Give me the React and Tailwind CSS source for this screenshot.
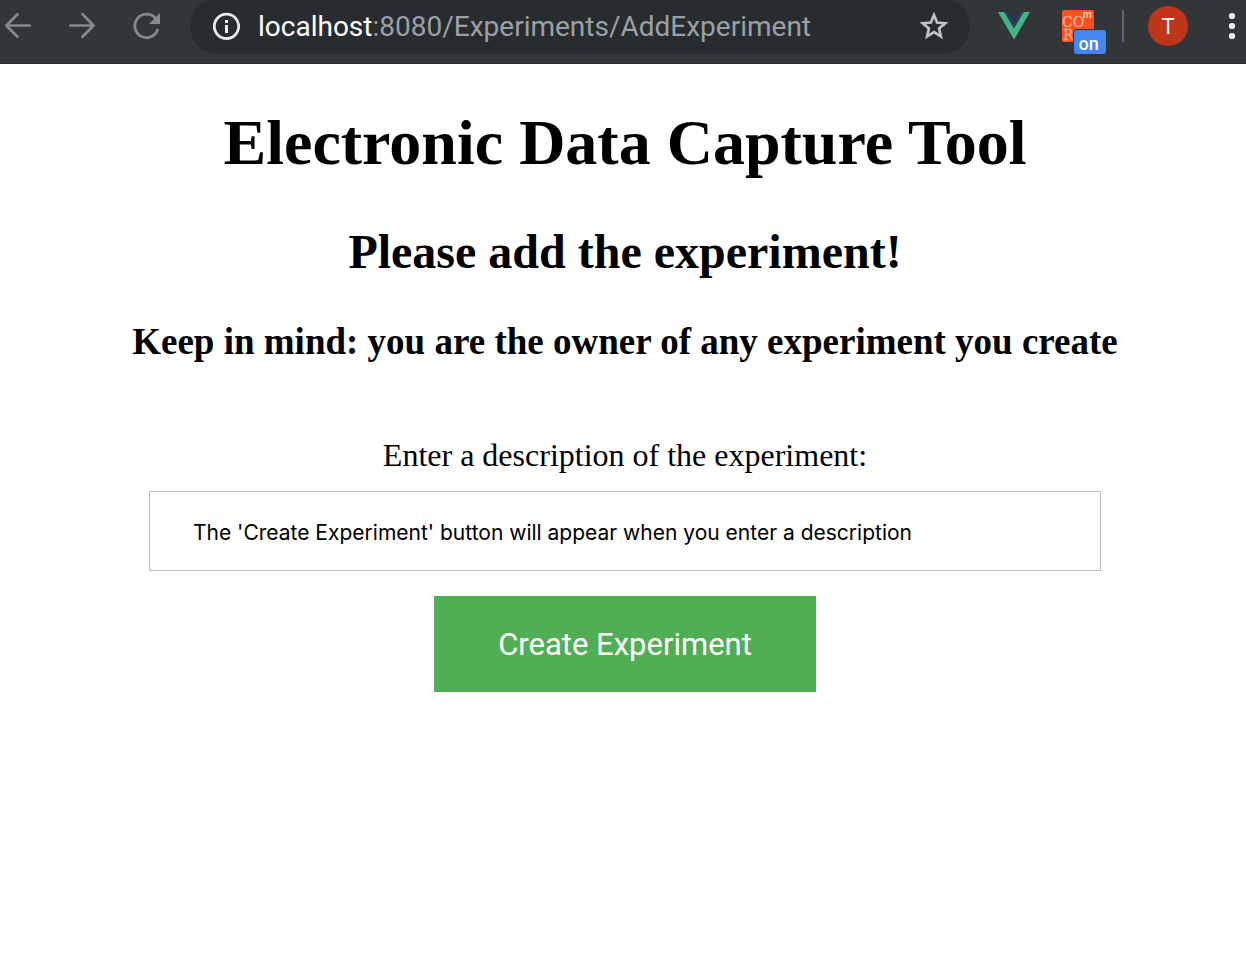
import React from "react";

const toolButton = "flex shrink-0 items-center justify-center";

function BackIcon() {
  return (
    <svg width="28" height="28" viewBox="0 0 28 28" fill="none" stroke="#85898b" strokeWidth="2.7" strokeLinecap="round" strokeLinejoin="round" aria-hidden="true">
      <path d="M25.7 13.5H3M13.5 2.3 2.4 13.5 13.5 24.7" />
    </svg>
  );
}

function ForwardIcon() {
  return (
    <svg width="28" height="28" viewBox="0 0 28 28" fill="none" stroke="#85898b" strokeWidth="2.7" strokeLinecap="round" strokeLinejoin="round" aria-hidden="true">
      <path d="M2.4 13.5h23M14.5 2.3l11.1 11.2-11.1 11.2" />
    </svg>
  );
}

function ReloadIcon() {
  return (
    <svg width="28" height="28" viewBox="0 0 28 28" fill="none" aria-hidden="true">
      <path d="M25.5 18A11.7 11.7 0 1 1 23 5.8" stroke="#85898b" strokeWidth="2.8" strokeLinecap="round" />
      <path d="M28 1v11H17z" fill="#85898b" />
    </svg>
  );
}

function InfoIcon() {
  return (
    <svg width="28" height="28" viewBox="0 0 28 28" className="shrink-0" aria-hidden="true">
      <circle cx="14.5" cy="14.3" r="12.2" fill="none" stroke="#e8eaed" strokeWidth="2.8" />
      <path d="M13 8h3v3h-3zM13 13h3v8h-3z" fill="#e8eaed" />
    </svg>
  );
}

function StarIcon() {
  return (
    <svg width="30" height="30" viewBox="0 0 30 30" fill="none" stroke="#bfc3c7" strokeWidth="2.7" aria-hidden="true">
      <path d="M15 4.1 18.1 11.5 26.2 12.2 20.1 17.5 21.9 25.4 15 21.2 8.1 25.4 9.9 17.5 3.8 12.2 11.9 11.5z" />
    </svg>
  );
}

function VueIcon() {
  return (
    <svg width="32" height="28" viewBox="0 0 32 28" aria-hidden="true">
      <path d="M0 0h6.4L16 16.4 25.6 0H32L16 27.6z" fill="#41b883" />
      <path d="M6.4 0h5.8L16 6.6 19.8 0h5.8L16 16.4z" fill="#34405e" />
      <path d="M9 0h3.6L16 6l3.4-6H23l-7 12.3z" fill="#2b3152" />
    </svg>
  );
}

function CorsIcon() {
  return (
    <svg width="44" height="50" viewBox="0 -6 44 50" aria-hidden="true">
      <rect width="32" height="32" rx="2" fill="#ff4f1c" />
      <text fontSize="14" fill="#ffb59c" stroke="#ffb59c" strokeWidth="0.3" fontFamily="'DejaVu Serif', serif">
        <tspan x="0" y="17">CO</tspan>
        <tspan x="1" y="30">R</tspan>
      </text>
      <text x="21" y="8" fontSize="10" fontWeight="500" fill="#ffe0d4" fontFamily="Roboto, sans-serif">m</text>
      <rect x="11" y="19" width="34" height="26" rx="4" fill="#323639" />
      <rect x="12" y="20" width="32" height="24" rx="3" fill="#4587f2" />
      <text x="16.5" y="40" fontSize="18" fontWeight="500" fill="#fff" fontFamily="Roboto, sans-serif">on</text>
    </svg>
  );
}

function BrowserBar() {
  return (
    <header className="flex h-16 items-start overflow-hidden border-b border-[#25282b] bg-[#323639] font-['Roboto',sans-serif]">
      <nav aria-label="Browser navigation" className="flex h-13 shrink-0 items-center gap-9 pl-1">
        <button type="button" aria-label="Back" className={toolButton}><BackIcon /></button>
        <button type="button" aria-label="Forward" className={toolButton}><ForwardIcon /></button>
        <button type="button" aria-label="Reload" className={toolButton}><ReloadIcon /></button>
      </nav>
      <div className="-mt-0.5 ml-[30px] flex h-14 min-w-0 flex-1 items-center rounded-full bg-[#282c2f] pr-[21px] pl-[22px]">
        <InfoIcon />
        <span className="ml-[18px] min-w-0 flex-1 truncate pt-0.5 text-[28px] leading-9 text-[#9aa0a6]">
          <span className="text-white">localhost</span>:8080/Experiments/AddExperiment
        </span>
        <button type="button" aria-label="Bookmark this page" className={toolButton}><StarIcon /></button>
      </div>
      <div className="flex h-13 shrink-0 items-center pl-7">
        <button type="button" aria-label="Vue devtools" className={toolButton}><VueIcon /></button>
        <button type="button" aria-label="Cross-origin extension" className="mt-1.5 ml-8 flex shrink-0"><CorsIcon /></button>
        <div className="ml-4 h-8 w-0.5 bg-[#5f6365]" />
        <button type="button" aria-label="Profile" className="ml-6 flex size-10 items-center justify-center rounded-full bg-[#bf3519] text-[22px] text-white">T</button>
        <button type="button" aria-label="Menu" className="ml-10 flex w-[18px] shrink-0">
          <svg width="8" height="28" viewBox="0 0 8 28" fill="#f1f3f4" aria-hidden="true">
            <circle cx="4" cy="4" r="3.1" />
            <circle cx="4" cy="14" r="3.1" />
            <circle cx="4" cy="24" r="3.1" />
          </svg>
        </button>
      </div>
    </header>
  );
}

export default function App() {
  return (
    <div className="min-h-screen bg-white text-black">
      <BrowserBar />
      <main className="flex flex-col items-center pt-[42px] pl-1 text-center font-['Liberation_Serif',serif]">
        <h1 className="text-[64px] leading-[74px] font-bold">Electronic Data Capture Tool</h1>
        <h2 className="mt-11 text-5xl leading-[56px] font-bold">Please add the experiment!</h2>
        <h3 className="mt-10 text-[37px] leading-[44px] font-bold">Keep in mind: you are the owner of any experiment you create</h3>
        <form className="mt-[73px] flex w-full flex-col items-center px-4" onSubmit={(event) => event.preventDefault()}>
          <label htmlFor="description" className="text-[32px] leading-9">Enter a description of the experiment:</label>
          <input
            id="description"
            type="text"
            defaultValue="The 'Create Experiment' button will appear when you enter a description"
            className="mt-[18px] h-20 w-full max-w-[952px] border border-[#bfbfbf] bg-white px-[43px] pt-0.5 font-['Inter',sans-serif] text-[21px] outline-none"
          />
          <button type="submit" className="mt-[25px] h-24 bg-[#50ae55] px-16 pt-0.5 font-['Roboto',sans-serif] text-[31px] text-white">
            Create Experiment
          </button>
        </form>
      </main>
    </div>
  );
}
